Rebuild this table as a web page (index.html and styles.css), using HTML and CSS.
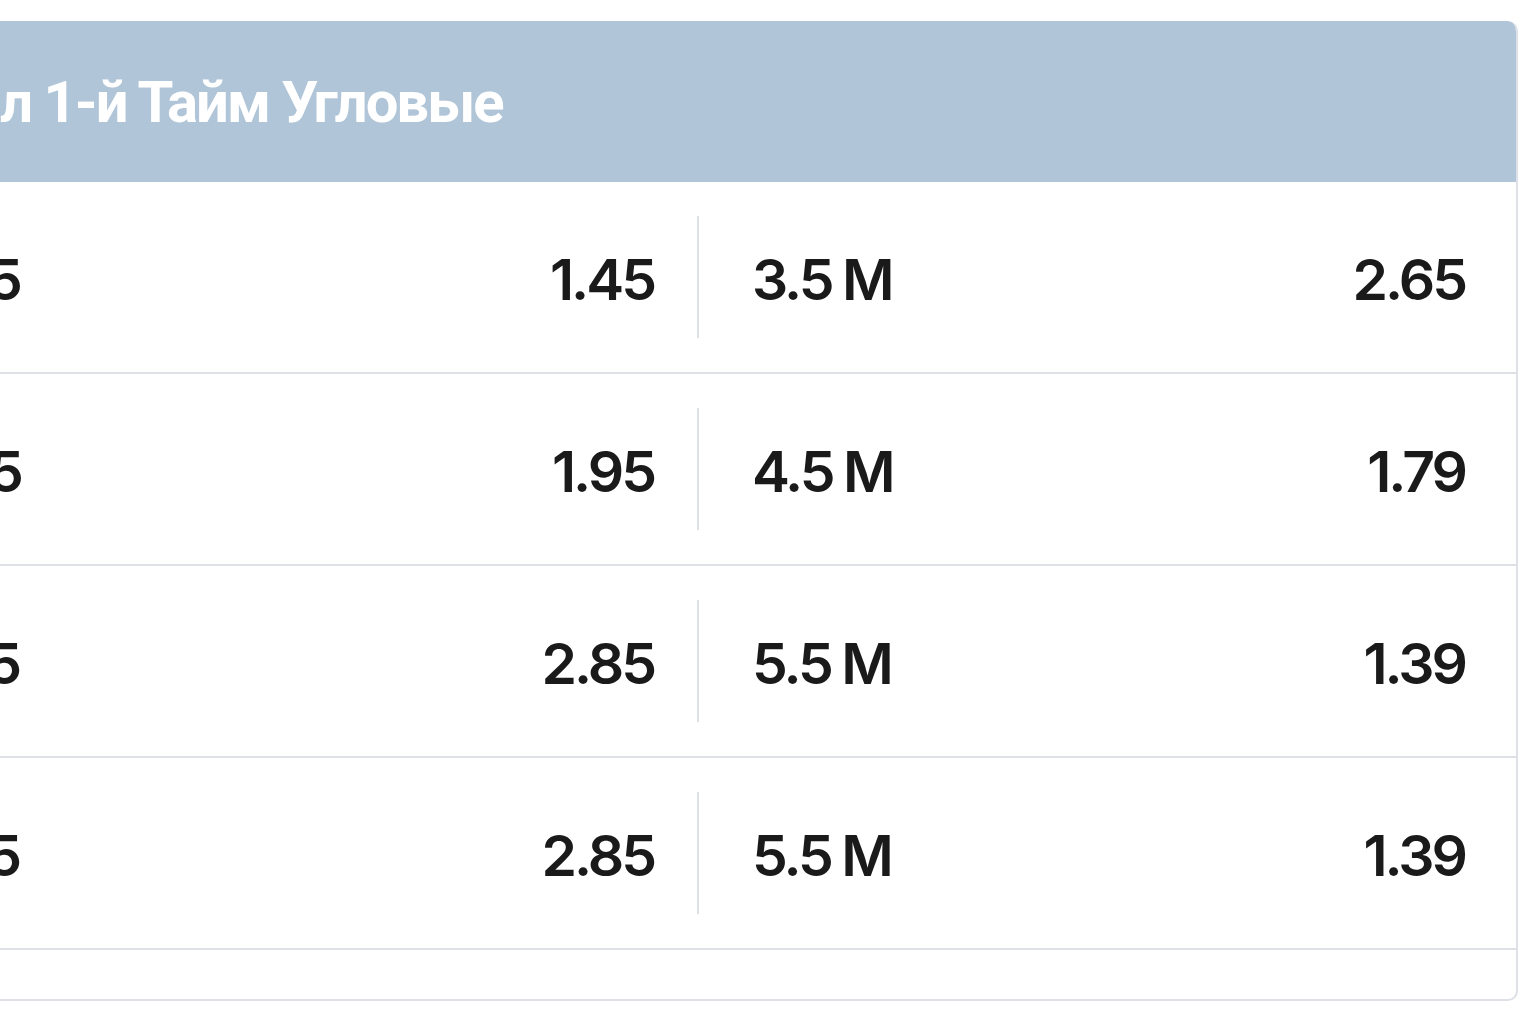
FILE: index.html
```html
<!DOCTYPE html>
<html lang="ru">
<head>
<meta charset="utf-8">
<title>Тотал 1-й Тайм Угловые</title>
<link rel="stylesheet" href="styles.css">
</head>
<body>
<div class="card">
  <div class="card-header">Тотал 1-й Тайм Угловые</div>
  <div class="row">
    <div class="cell cell-left"><span class="label">Б 3.5</span><span class="odd">1.45</span></div>
    <div class="divider"></div>
    <div class="cell cell-right"><span class="label">3.5 M</span><span class="odd">2.65</span></div>
  </div>
  <div class="row">
    <div class="cell cell-left"><span class="label">Б 4.5</span><span class="odd">1.95</span></div>
    <div class="divider"></div>
    <div class="cell cell-right"><span class="label">4.5 M</span><span class="odd">1.79</span></div>
  </div>
  <div class="row">
    <div class="cell cell-left"><span class="label">Б 5.5</span><span class="odd">2.85</span></div>
    <div class="divider"></div>
    <div class="cell cell-right"><span class="label">5.5 M</span><span class="odd">1.39</span></div>
  </div>
  <div class="row">
    <div class="cell cell-left"><span class="label">Б 5.5</span><span class="odd">2.85</span></div>
    <div class="divider"></div>
    <div class="cell cell-right"><span class="label">5.5 M</span><span class="odd">1.39</span></div>
  </div>
  <div class="card-footer"></div>
</div>
</body>
</html>
```
FILE: styles.css
```css
html, body {
  margin: 0;
  padding: 0;
  background: #ffffff;
  overflow: hidden;
}
body {
  padding-top: 21px;
  font-family: Inter, "Liberation Sans", sans-serif;
  color: #1a1a1a;
}
.card {
  margin-left: -122px;
  width: 1636px;
  border: 2px solid #dde1e6;
  border-top: none;
  border-radius: 10px;
  overflow: hidden;
  background: #fff;
}
.card-header {
  height: 161px;
  margin: 0 -2px;
  padding-left: 7px;
  background: #b0c5d8;
  color: #ffffff;
  font-family: Roboto, "Noto Sans", sans-serif;
  font-weight: 700;
  font-size: 58px;
  letter-spacing: -2px;
  display: flex;
  align-items: center;
  white-space: nowrap;
  border-radius: 10px 10px 0 0;
}
.row {
  display: grid;
  grid-template-columns: 1fr 2px 1fr;
  align-items: center;
  height: 190px;
  border-bottom: 2px solid #dde1e6;
}
.cell {
  display: flex;
  align-items: center;
  justify-content: space-between;
  padding-top: 5px;
  font-size: 57px;
  font-weight: 600;
  letter-spacing: -3px;
  word-spacing: -1px;
  white-space: nowrap;
}
.cell-left {
  padding-left: 16px;
  padding-right: 43px;
}
.cell-right {
  padding-left: 53px;
  padding-right: 51px;
}
.divider {
  width: 2px;
  height: 122px;
  background: #dde1e6;
}
.card-footer {
  height: 49px;
}
```
